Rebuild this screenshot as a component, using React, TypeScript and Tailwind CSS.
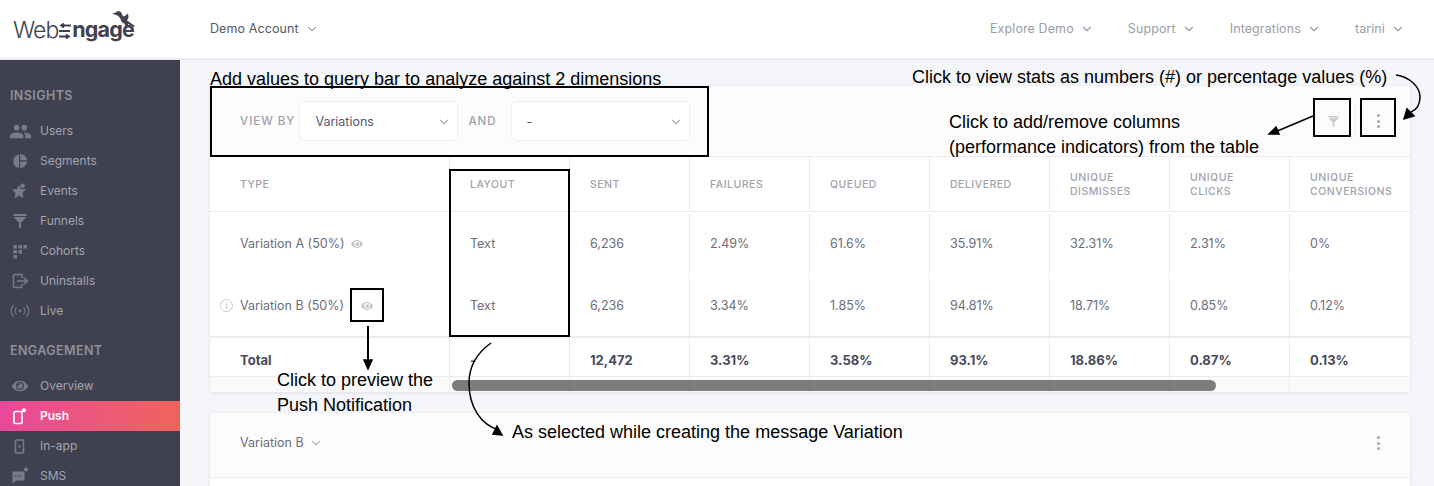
import type { ReactNode } from "react";
import { ChevronDown } from "lucide-react";
import { FaEye } from "react-icons/fa";
import { MdPeople } from "react-icons/md";

const sans = "font-['Inter','Noto_Sans',sans-serif]";
const note = "absolute font-['Liberation_Sans',Arial,sans-serif] text-[18px] leading-[25px] text-black whitespace-nowrap";

function PieIcon() {
  return (
    <svg width="16" height="16" viewBox="0 0 16 16" fill="currentColor">
      <path d="M7 1.500v13.400A6.800 6.800 0 0 1 7 1.500z" />
      <path d="M8.200 1v6.300h6.800A6.900 6.900 0 0 0 8.200 1z" />
      <path d="M8.200 8.500V15A6.800 6.800 0 0 0 15 8.500z" />
    </svg>
  );
}

function StarIcon() {
  return (
    <svg width="16" height="16" viewBox="0 0 16 16" fill="currentColor">
      <path d="M7 2l2 3.900 5.300.6-3.900 3.500 1.100 5.200L7 12.500l-4.500 2.700 1.100-5.200L-.3 6.500 5 5.900z" />
      <circle cx="10.500" cy="2.800" r="2.300" />
    </svg>
  );
}

function FunnelIcon({ size = 14 }: { size?: number }) {
  return (
    <svg width={size} height={size} viewBox="0 0 14 14" fill="currentColor">
      <path d="M.5 0h13v2H.5zM.5 3h13L8 8.500V14H6V8.500z" />
    </svg>
  );
}

function CohortIcon() {
  return (
    <svg width="15" height="15" viewBox="0 0 15 15" fill="currentColor">
      <rect x="0.500" y="1" width="3.500" height="3.500" rx="0.500" />
      <rect x="5.500" y="1" width="3.500" height="3.500" rx="0.500" />
      <rect x="10.500" y="1" width="3.500" height="3.500" rx="0.500" />
      <rect x="0.500" y="6" width="3.500" height="3.500" rx="0.500" />
      <rect x="5.500" y="6" width="3.500" height="3.500" rx="0.500" />
      <rect x="0.500" y="11" width="3.500" height="3.500" rx="0.500" />
    </svg>
  );
}

function UninstallIcon() {
  return (
    <svg width="17" height="16" viewBox="0 0 17 16" fill="none" stroke="currentColor" strokeWidth="1.500">
      <path d="M10 5V1.500H2.500a1 1 0 0 0-1 1v11a1 1 0 0 0 1 1H9a1 1 0 0 0 1-1V11" />
      <path d="M5 8h10M11.500 4.500L15.500 8l-4 3.500" />
    </svg>
  );
}

function LiveIcon() {
  return (
    <svg width="20" height="14" viewBox="0 0 20 14" fill="none" stroke="currentColor" strokeWidth="1.300">
      <circle cx="10" cy="7" r="1.400" fill="currentColor" stroke="none" />
      <path d="M6.500 3.500a5 5 0 0 0 0 7M13.500 3.500a5 5 0 0 1 0 7M3.500 1a9 9 0 0 0 0 12M16.500 1a9 9 0 0 1 0 12" />
    </svg>
  );
}

function PushIcon() {
  return (
    <svg width="17" height="17" viewBox="0 0 17 17" fill="none">
      <rect x="2" y="3.500" width="8" height="12" rx="1" stroke="currentColor" strokeWidth="1.600" />
      <circle cx="12" cy="2.200" r="2" fill="currentColor" />
    </svg>
  );
}

function InAppIcon() {
  return (
    <svg width="12" height="15" viewBox="0 0 12 15" fill="none">
      <rect x="1.500" y="1" width="8" height="13" rx="1" stroke="currentColor" strokeWidth="1.600" />
      <circle cx="5.500" cy="7.500" r="1.200" fill="currentColor" />
    </svg>
  );
}

function SmsIcon() {
  return (
    <svg width="18" height="18" viewBox="0 0 18 18" fill="currentColor">
      <path d="M1.500 4.500h11a1 1 0 0 1 1 1v7a1 1 0 0 1-1 1H5l-3.500 3v-11a1 1 0 0 1 0-1z" />
      <circle cx="15" cy="2.500" r="2" />
      <circle cx="4.500" cy="9" r="0.800" fill="#3f4150" />
      <circle cx="7" cy="9" r="0.800" fill="#3f4150" />
      <circle cx="9.500" cy="9" r="0.800" fill="#3f4150" />
    </svg>
  );
}

function NavItem({ icon, label, active }: { icon: ReactNode; label: string; active?: boolean }) {
  return (
    <div
      className={
        active
          ? "flex h-[30px] items-center bg-gradient-to-r from-[#e9479b] to-[#ee6458] font-semibold text-white"
          : "flex h-[30px] items-center text-[#a3a5ae]"
      }
    >
      <span className={active ? "flex w-[40px] justify-center pl-[1px] text-white" : "flex w-[40px] justify-center text-[#797b87]"}>
        {icon}
      </span>
      <span className="text-[12px]">{label}</span>
    </div>
  );
}

function Sidebar() {
  return (
    <aside className="h-full w-[180px] shrink-0 overflow-hidden bg-[#3f4150] pt-[26px]">
      <div className="mb-[10px] h-[20px] pl-[10px] text-[12.500px] font-semibold leading-[20px] tracking-[0.400px] text-[#8e909a]">INSIGHTS</div>
      <NavItem icon={<MdPeople size={23} />} label="Users" />
      <NavItem icon={<PieIcon />} label="Segments" />
      <NavItem icon={<StarIcon />} label="Events" />
      <NavItem icon={<FunnelIcon />} label="Funnels" />
      <NavItem icon={<CohortIcon />} label="Cohorts" />
      <NavItem icon={<UninstallIcon />} label="Uninstalls" />
      <NavItem icon={<LiveIcon />} label="Live" />
      <div className="mb-[10px] mt-[15px] h-[20px] pl-[10px] text-[12.500px] font-semibold leading-[20px] tracking-[0.400px] text-[#8e909a]">ENGAGEMENT</div>
      <NavItem icon={<FaEye size={16} />} label="Overview" />
      <NavItem icon={<PushIcon />} label="Push" active />
      <NavItem icon={<InAppIcon />} label="In-app" />
      <NavItem icon={<SmsIcon />} label="SMS" />
    </aside>
  );
}

function Logo() {
  return (
    <div className="relative flex h-[60px] w-[210px] shrink-0 items-center pl-[13px] pt-[2px] text-[23px] leading-none tracking-[-1px] text-[#3f4150]">
      <span className="font-light">Web</span>
      <svg width="12" height="16" viewBox="0 0 12 16" fill="none" stroke="currentColor" strokeWidth="1.800" className="mx-[1px] mt-[1px]">
        <path d="M3 2.500h9M5 .500L2 2.500l3 2M0 8h11M0 13.500h9M7 11.500l3 2-3 2" />
      </svg>
      <span className="text-[21.500px] font-bold tracking-[-0.800px]">ngage</span>
      <svg width="26" height="22" viewBox="0 0 26 22" fill="currentColor" className="absolute left-[112px] top-[12px]">
        <path fillRule="evenodd" d="M0 2.500l3.500-.8C5-.3 8.500-.3 9.500 2l1.500 3.500c2-1 3.500-1 4.500-3 1.500 2 1.300 5-.5 7l8 5.500-1.300 1-5.500-3c-.5 2-2 3.500-3 4.500 .5-2 .2-3.500-1-5-2-.5-3.500-2.500-4-5.500L5.500 4.500z" />
      </svg>
    </div>
  );
}

function TopLink({ label, dark }: { label: string; dark?: boolean }) {
  return (
    <div className={dark ? "flex items-center gap-[6px] text-[#55576a]" : "flex items-center gap-[6px] text-[#9a9ca6]"}>
      <span className="text-[12.500px] tracking-[0.100px]">{label}</span>
      <ChevronDown size={14} strokeWidth={dark ? 1.500 : 2} />
    </div>
  );
}

function Header() {
  return (
    <header className="flex h-[60px] shrink-0 items-center border-b-2 border-[#eceef2] bg-white">
      <Logo />
      <TopLink label="Demo Account" dark />
      <div className="ml-auto flex items-center gap-[34px] pr-[29px]">
        <TopLink label="Explore Demo" />
        <TopLink label="Support" />
        <TopLink label="Integrations" />
        <TopLink label="tarini" />
      </div>
    </header>
  );
}

function Select({ value, width }: { value: string; width: string }) {
  return (
    <div className={`flex h-[40px] items-center justify-between rounded-[5px] border border-[#eeeef1] bg-white pl-[15px] pr-[6px] text-[12.500px] text-[#55576a] ${width}`}>
      <span className="pt-[2px]">{value}</span>
      <ChevronDown size={14} className="mt-[2px] text-[#a9abb3]" />
    </div>
  );
}

function Dots() {
  return (
    <div className="flex flex-col gap-[2.500px]">
      <span className="size-[3px] rounded-full bg-[#a8a9b0]" />
      <span className="size-[3px] rounded-full bg-[#a8a9b0]" />
      <span className="size-[3px] rounded-full bg-[#a8a9b0]" />
    </div>
  );
}

const columns = ["LAYOUT", "SENT", "FAILURES", "QUEUED", "DELIVERED", "UNIQUE DISMISSES", "UNIQUE CLICKS", "UNIQUE CONVERSIONS"];
const rowA = ["Text", "6,236", "2.49%", "61.6%", "35.91%", "32.31%", "2.31%", "0%"];
const rowB = ["Text", "6,236", "3.34%", "1.85%", "94.81%", "18.71%", "0.85%", "0.12%"];
const total = ["-", "12,472", "3.31%", "3.58%", "93.1%", "18.86%", "0.87%", "0.13%"];

const grid = "grid grid-cols-[239px_repeat(8,120px)]";

function StatsTable() {
  return (
    <>
      <div className={`${grid} h-[56px] border-y border-[#ececef]`}>
        <div className="flex items-center pl-[30px] pt-[2px] text-[10.500px] font-medium tracking-[0.500px] text-[#a0a2ab]">TYPE</div>
        {columns.map((c) => (
          <div key={c} className="flex items-center border-l border-[#ececef] pl-[20px] pt-[2px] text-[10.500px] font-medium leading-[14px] tracking-[0.500px] text-[#a0a2ab]">
            <span className="w-[84px]">{c}</span>
          </div>
        ))}
      </div>
      <div className={`${grid} h-[62px] pt-[2px] text-[12.500px] text-[#6b6d7a]`}>
        <div className="flex items-center gap-[6px] pl-[30px]">
          <span>Variation A (50%)</span>
          <FaEye size={12} className="text-[#c4c5cb]" />
        </div>
        {rowA.map((v, i) => (
          <div key={i} className="flex items-center border-l border-[#ececef] pl-[20px]">{v}</div>
        ))}
      </div>
      <div className={`${grid} h-[62px] pt-[2px] text-[12.500px] text-[#6b6d7a]`}>
        <div className="relative flex items-center gap-[6px] pl-[30px]">
          <span className="absolute left-[10px] top-[23px] flex size-[13px] items-center justify-center rounded-full border border-[#c9cad0] text-[9px] text-[#b5b6bd]">i</span>
          <span>Variation B (50%)</span>
          <FaEye size={12} className="ml-[11px] text-[#c4c5cb]" />
        </div>
        {rowB.map((v, i) => (
          <div key={i} className="flex items-center border-l border-[#ececef] pl-[20px]">{v}</div>
        ))}
      </div>
      <div className={`${grid} h-[41px] border-b border-t-2 border-[#ececef] text-[13px] font-bold text-[#484a59]`}>
        <div className="flex items-center pl-[30px] pt-[8px]">Total</div>
        {total.map((v, i) => (
          <div key={i} className="flex items-center border-l border-[#ececef] pl-[20px] pt-[8px]">{v}</div>
        ))}
      </div>
      <div className={`${grid} h-[15px] bg-[#fafafa]`}>
        <div />
        {columns.map((c) => (
          <div key={c} className="border-l border-[#ececef]" />
        ))}
      </div>
    </>
  );
}

function Annotations() {
  return (
    <div className="pointer-events-none absolute inset-0">
      <div className={`${note} left-[210px] top-[67px]`}>Add values to query bar to analyze against 2 dimensions</div>
      <div className={`${note} left-[912px] top-[65px]`}>Click to view stats as numbers (#) or percentage values (%)</div>
      <div className={`${note} left-[949px] top-[110px]`}>Click to add/remove columns<br />(performance indicators) from the table</div>
      <div className={`${note} left-[277px] top-[368px]`}>Click to preview the<br />Push Notification</div>
      <div className={`${note} left-[512px] top-[420px]`}>As selected while creating the message Variation</div>

      <div className="absolute left-[210px] top-[86px] h-[71px] w-[499px] border-2 border-black" />
      <div className="absolute left-[449px] top-[169px] h-[168px] w-[121px] border-2 border-black" />
      <div className="absolute left-[350px] top-[288px] h-[34px] w-[34px] border-2 border-black" />
      <div className="absolute left-[1313px] top-[98px] h-[39px] w-[38px] border-2 border-black" />
      <div className="absolute left-[1360px] top-[98px] h-[39px] w-[36px] border-2 border-black" />

      <svg width="1434" height="486" className="absolute left-0 top-0" fill="none" stroke="black" strokeWidth="1.500">
        <path d="M1396 75c14 2 24 12 24 22 0 8-4 13-9 15" />
        <path d="M1404 119l3-10 7 7z" fill="black" />
        <path d="M1313 116l-38 16" />
        <path d="M1269 134l7-7 3 7z" fill="black" />
        <path d="M368 326v40" strokeWidth="2" />
        <path d="M368 369l-4-9h8z" fill="black" />
        <path d="M491 343c-14 10-22 24-22 40 0 24 12 42 30 47" />
        <path d="M502 435l-9-1 4-8z" fill="black" />
      </svg>
      <div className="absolute left-[452px] top-[380px] h-[11px] w-[764px] rounded-full bg-black/50" />
    </div>
  );
}

export default function App() {
  return (
    <div className={`relative flex h-[486px] w-[1434px] flex-col overflow-hidden bg-[#f5f6fa] ${sans}`}>
      <Header />
      <div className="flex min-h-0 flex-1">
        <Sidebar />
        <main className="w-[1254px] pl-[30px] pt-[26px]">
          <section className="w-[1200px] overflow-hidden rounded-[4px] bg-white shadow-[0_1px_4px_rgba(60,64,80,0.12)]">
            <div className="flex h-[70px] items-center bg-[#fcfcfc] pl-[30px] pr-[14px]">
              <span className="mr-[4px] pt-[2px] text-[11.500px] font-medium tracking-[1px] text-[#9fa1aa]">VIEW BY</span>
              <Select value="Variations" width="w-[159px]" />
              <span className="ml-[10px] mr-[14px] pt-[2px] text-[11.500px] font-medium tracking-[1px] text-[#9fa1aa]">AND</span>
              <Select value="-" width="w-[179px]" />
              <div className="ml-auto flex items-center">
                <span className="mr-[16px] text-[#c9cad0]"><FunnelIcon size={11} /></span>
                <span className="h-[34px] w-px bg-[#eeeef1]" />
                <span className="ml-[21px] mr-[16px]"><Dots /></span>
              </div>
            </div>
            <StatsTable />
          </section>
          <section className="mt-[21px] w-[1200px] overflow-hidden rounded-t-[4px] bg-[#fcfcfc] shadow-[0_1px_4px_rgba(60,64,80,0.12)]">
            <div className="flex h-[65px] items-center justify-between border-b border-[#ececef] pb-[4px] pl-[30px] pr-[30px]">
              <div className="flex items-center gap-[5px] text-[12.500px] text-[#6b6d7a]">
                <span>Variation B</span>
                <ChevronDown size={14} className="text-[#b5b6bd]" />
              </div>
              <Dots />
            </div>
            <div className="h-[20px] bg-white" />
          </section>
        </main>
      </div>
      <Annotations />
    </div>
  );
}
